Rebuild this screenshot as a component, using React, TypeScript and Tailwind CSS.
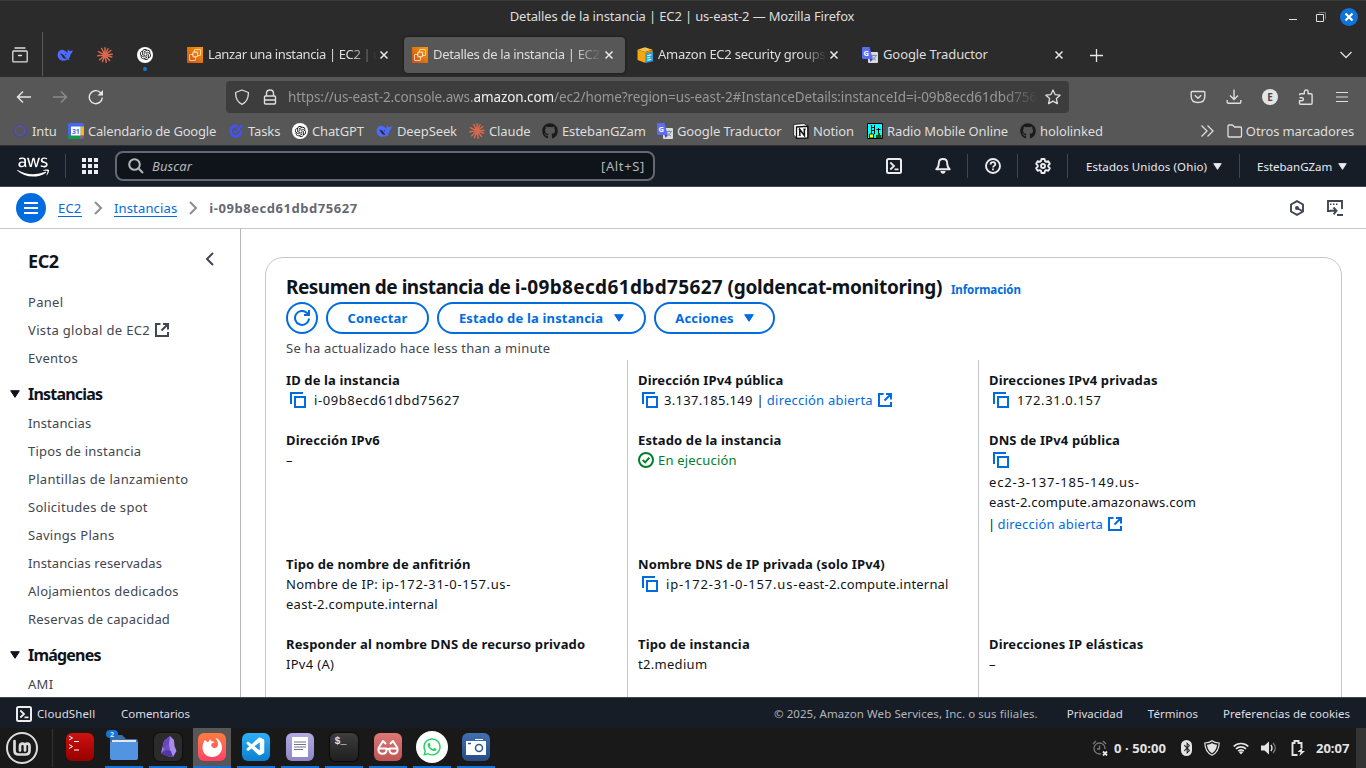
import type { ReactNode } from 'react';
import { FaAws, FaGithub, FaWhatsapp, FaBluetoothB } from 'react-icons/fa';
import { SiOpenai } from 'react-icons/si';
import { VscVscode } from 'react-icons/vsc';

type P = { children?: ReactNode; className?: string };

/* ---------- favicons ---------- */

const Svg = ({ children, className = 'size-4', box = '0 0 16 16' }: P & { box?: string }) => (
  <svg viewBox={box} className={`shrink-0 ${className}`} fill="none">{children}</svg>
);

const DeepSeek = () => (
  <Svg>
    <path fill="#4d6bfe" d="M10.6 6.2C9.6 5 8.4 3.7 6.6 3 4 2.2.8 4 .6 7.4.4 11 3 13.6 6.3 13.7c1.700 0 3-.4 4.200-1.200.7.4 1.600.6 2.300.3-.2-.4-.9-.6-1.100-1.200 1.300-1.500 1.700-3 1.900-4.700 1.300-.4 2-1.600 2-3.700-.9.5-1.800.4-2.500 1C12.500 3.600 11.800 3.200 10.900 2.400c-.6 1.300-.2 2.600-.3 3.800z" />
    <path fill="#2b2b2b" d="M3.200 6.800c1.800-.6 3.300.9 4.300 2.400.7 1 1.300 1.700 2.100 2.200-1.800.9-3.400-.2-4.300-1.700-.6-1-1.200-2-2.100-2.900zM7.400 7c.8-.3 1.900.3 1.900 1.400-.6-.1-.9-.7-1.900-1.400z" />
  </Svg>
);

const Burst = () => (
  <Svg>
    <path stroke="#d9674e" strokeWidth="1.500" strokeLinecap="round" d="M8 8V.8M8 8l3-6.300M8 8l5.800-4.500M8 8l7.200-.8M8 8l6.700 2M8 8l4.600 5.400M8 8l1.200 7.200M8 8l-2.600 6.700M8 8l-5.300 4.700M8 8L.8 8.800M8 8L1.500 4.700M8 8L4.700 1.500" />
  </Svg>
);

const Gpt = () => (
  <span className="flex size-4 shrink-0 items-center justify-center rounded-full bg-white text-black">
    <SiOpenai className="size-[11px]" />
  </span>
);

const Ec2 = () => (
  <Svg>
    <defs><linearGradient id="ec2g" x1="0" y1="1" x2="1" y2="0"><stop stopColor="#c8511b" /><stop offset="1" stopColor="#f90" /></linearGradient></defs>
    <path fill="url(#ec2g)" d="M0 0h16v16H0z" />
    <g stroke="#fff" strokeWidth=".9">
      <rect x="5.900" y="5.100" width="4.700" height="4.700" rx=".6" />
      <path strokeOpacity=".75" d="M7.500 5V3.100c0-.4.3-.6.600-.6h4.800c.4 0 .6.200.6.600v4.800c0 .4-.2.600-.6.600H11M5.900 7.500H3.100c-.4 0-.6.200-.6.600v4.800c0 .4.2.600.6.600h4.800c.4 0 .6-.2.600-.6V10" />
    </g>
  </Svg>
);

const AwsCube = () => (
  <Svg>
    <path fill="#f7c04a" d="M8 .3l7.500 2.500L8 5 .5 2.800z" />
    <path fill="#f4a80b" d="M.5 2.800L8 5v10.700L.5 13z" />
    <path fill="#d98b05" d="M8 5l7.500-2.200V13L8 15.700z" />
    <path fill="#2b9fd8" d="M8.700 6.500L16 4.800v9.400l-7.300 1.800z" />
    <path stroke="#fff" strokeWidth="1.100" d="M10.300 8.700l4-.9M10.300 11l3-.7M10.300 13.200l4-.9" />
  </Svg>
);

const GTranslate = () => (
  <Svg>
    <rect x="6" y="5" width="10" height="11" rx="1" fill="#dcdcdc" />
    <path stroke="#7d8fa5" d="M9.500 8.500H15M12.200 7.500v1M14 8.500c-.5 2-2 3.500-3.500 4.300M10.500 9.500c.8 1.800 2 2.800 3.500 3.500" />
    <path fill="#4a3fc4" d="M7.500 12h3.300L8.700 15z" />
    <path fill="#5b6cf5" d="M1.200 0h6.300l3.300 12H1.200C.5 12 0 11.500 0 10.800V1.200C0 .5.500 0 1.200 0z" />
    <text x="1.500" y="8.500" fontSize="7.500" fontWeight="700" fill="#fff" fontFamily="Noto Sans">G</text>
  </Svg>
);

const Calendar = () => (
  <Svg>
    <rect width="16" height="16" rx="1.500" fill="#4666f0" />
    <path fill="#fbbc04" d="M12.500 3.500H16v9h-3.500z" />
    <path fill="#0c9d45" d="M0 12.500h12.500V16H1.500C.6 16 0 15.400 0 14.500z" />
    <path fill="#ea4335" d="M12.500 12.500H16L12.500 16z" />
    <path fill="#fff" d="M3 3.500h9.500v9H3z" />
    <text x="4" y="10.700" fontSize="6.800" fontWeight="700" fill="#4666f0" fontFamily="Noto Sans">31</text>
  </Svg>
);

const IntuIcon = () => (
  <Svg>
    <circle cx="8" cy="8" r="6.200" stroke="#4c4b9c" strokeWidth="3" strokeDasharray="1 .95" />
    <circle cx="8" cy="8" r="4.700" stroke="#5654c4" />
  </Svg>
);

const TasksIcon = () => (
  <Svg>
    <path stroke="#4353f2" strokeWidth="2.800" d="M10 3.300A5.300 5.300 0 1 0 13 7.500" />
    <path stroke="#4353f2" strokeWidth="2.200" d="M5.500 7.700l2 2 4.500-5" />
    <path fill="#4353f2" d="M13 .8l.8 1.900 1.700.800-1.700.800L13 6.200l-.8-1.900-1.700-.8 1.700-.8z" />
  </Svg>
);

const NotionIcon = () => (
  <Svg>
    <path fill="#fff" stroke="#111" strokeWidth=".8" d="M.7 1.500L11 .6l4.300 2.700v11.600L4 15.500.7 12z" />
    <path fill="#fff" stroke="#111" strokeWidth="1.300" d="M3.500 4l11.300-.7v11.500L3.500 15.400z" />
    <path stroke="#111" strokeWidth="1.500" d="M6.800 12.500V6.500l4.600 6V6" />
    <path stroke="#111" strokeWidth=".8" d="M5.500 6.300h2M10.200 6H13M5.700 12.600h2.200" />
  </Svg>
);

const RadioIcon = () => (
  <Svg>
    <path fill="#0ff" stroke="#000" d="M.5.500h15v15H.5z" />
    <path stroke="#000" d="M4.500 2v9M7.500 2v9M4.500 4.500h3M4.500 7.500h3M11.500 5v6M9.500 6.500h4" />
    <path fill="#ff0" stroke="#000" strokeWidth=".8" d="M2.500 11h4v4h-4z" />
    <path fill="#0a5c0a" d="M9 12h5.500v3H9zM11 10h2v5h-2z" />
  </Svg>
);

/* ---------- Firefox ---------- */

const Close = () => (
  <Svg className="size-4"><path stroke="#e8e8e8" strokeWidth="1.500" d="M4.500 4.500l7 7M11.500 4.500l-7 7" /></Svg>
);

function Tab({ icon, title, active, fade = true, className = '' }: { icon: ReactNode; title: string; active?: boolean; fade?: boolean; className?: string }) {
  return (
    <div className={`mr-1 flex h-9 w-[221px] items-center rounded pl-2 ${active ? 'bg-[#575757] shadow-[0_0_3px_#111]' : ''}`}>
      {icon}
      <span className={`ml-[5px] w-[169px] overflow-hidden whitespace-nowrap ${className} ${fade ? '[mask-image:linear-gradient(to_right,#000_142px,transparent)]' : ''}`}>{title}</span>
      <span className="-ml-px"><Close /></span>
    </div>
  );
}

function Firefox() {
  return (
    <header className="flex h-[145px] shrink-0 flex-col text-[13px] tracking-[-0.12px] text-[#dedede]">
      <div className="flex h-8 items-center border-t border-[#3a3a3a] bg-[#2b2b2b]">
        <div className="w-[78px]" />
        <div className="flex-1 pl-[11px] pr-[10px] text-center tracking-[-0.15px]">Detalles de la instancia | EC2 | us-east-2 — Mozilla Firefox</div>
        <div className="flex items-center pr-2">
          <Svg className="mr-3 size-4"><path stroke="#e0e0e0" d="M4 10.500h8" /></Svg>
          <Svg className="mr-[11px] size-4"><path stroke="#e0e0e0" d="M3.500 5.500h7v7h-7z" /><path stroke="#777" d="M5.500 3.500h7v7" /></Svg>
          <span className="flex size-[18px] items-center justify-center rounded-full bg-[#0f73db]">
            <Svg className="size-4"><path stroke="#fff" strokeWidth="2.200" d="M4.500 4.500l7 7M11.500 4.500l-7 7" /></Svg>
          </span>
        </div>
      </div>
      <div className="flex h-[45px] items-center bg-[#2b2b2b]">
        <div className="flex h-full w-[42px] items-center pl-3">
          <Svg><path stroke="#dedede" strokeWidth="1.300" strokeLinecap="round" d="M3 1h10M1.700 4h12.600c.5 0 .9.400.9.900v9c0 .6-.4 1-.9 1H1.700c-.5 0-.9-.4-.9-1V4.900c0-.5.400-.9.900-.9zM6.500 8.500h3" /></Svg>
        </div>
        <div className="h-11 w-px self-start bg-[#5b5b5b]" />
        <div className="flex w-11 justify-center"><DeepSeek /></div>
        <div className="flex w-9 justify-center"><Burst /></div>
        <div className="relative flex w-11 justify-center"><Gpt /><span className="absolute top-[20px] size-1 rounded-full bg-[#0f7be0]" /></div>
        <div className="ml-[12px] flex">
          <Tab icon={<Ec2 />} title="Lanzar una instancia | EC2 | us-east-2" className="tracking-[-0.38px]" />
          <Tab icon={<Ec2 />} title="Detalles de la instancia | EC2 | us-east-2" active className="tracking-[-0.33px]" />
          <Tab icon={<AwsCube />} title="Amazon EC2 security groups for" className="tracking-[-0.25px]" />
          <Tab icon={<GTranslate />} title="Google Traductor" fade={false} className="tracking-[-0.1px]" />
        </div>
        <Svg className="ml-[9px] size-4"><path stroke="#e8e8e8" strokeWidth="1.300" d="M8.500 2v13M2 8.500h13" /></Svg>
        <Svg className="ml-auto mr-3 size-4"><path stroke="#dedede" strokeWidth="1.300" d="M2.500 5L8 10.500 13.500 5" /></Svg>
      </div>
      <div className="flex h-10 shrink-0 items-center bg-[#575757]">
        <Svg className="ml-4 size-4"><path stroke="#e6e6e6" strokeWidth="1.400" d="M15 8H1.500M7 2.500L1.500 8 7 13.500" /></Svg>
        <Svg className="ml-5 size-4"><path stroke="#8c8c8c" strokeWidth="1.400" d="M1 8h13.500M9 2.500L14.500 8 9 13.500" /></Svg>
        <Svg className="ml-5 size-4"><path stroke="#e6e6e6" strokeWidth="1.400" d="M14.300 8.500A6.500 6.500 0 1 1 12 3.200l2 2" /><path fill="#e6e6e6" d="M15 1v5.500H9.500z" /></Svg>
        <div className="ml-[122px] flex h-8 w-[843px] items-center rounded bg-[#3d3d3d] text-[13.500px] tracking-[-0.1px] text-[#989898]">
          <Svg className="ml-2 size-4"><path stroke="#dedede" strokeWidth="1.300" strokeLinejoin="round" d="M8 1l6.400 2.500C14.500 9 12.500 13 8 15.300 3.500 13 1.500 9 1.600 3.500z" /></Svg>
          <Svg className="ml-3 size-4"><path stroke="#dedede" strokeWidth="1.400" d="M3.500 7h9c.6 0 1 .4 1 1v6c0 .6-.4 1-1 1h-9c-.6 0-1-.4-1-1V8c0-.6.4-1 1-1zM4.500 7V4.500C4.500 2.500 6 1 8 1s3.500 1.500 3.500 3.500V7M2.500 11h11" /></Svg>
          <div className="ml-[10px] w-[750px] overflow-hidden whitespace-nowrap [mask-image:linear-gradient(to_right,#000_715px,transparent)]">
            https://us-east-2.console.aws.<span className="text-[#f0f0f0]">amazon.com</span>/ec2/home?region=us-east-2#InstanceDetails:instanceId=i-09b8ecd61dbd75627
          </div>
          <Svg className="ml-[7px] size-4"><path stroke="#dedede" strokeWidth="1.300" strokeLinejoin="round" d="M8 1l2.100 4.600 5 .6-3.700 3.400 1 5L8 12.100l-4.400 2.500 1-5L.9 6.200l5-.6z" /></Svg>
        </div>
        <Svg className="ml-[121px] size-4"><path stroke="#dedede" strokeWidth="1.400" strokeLinejoin="round" d="M2 2.500h12c.5 0 .8.3.8.8V7.500c0 4-3 6-6.800 6s-6.800-2-6.800-6V3.300c0-.5.3-.8.8-.8zM4.800 6.300L8 9.300l3.200-3" /></Svg>
        <Svg className="ml-5 size-4"><path stroke="#dedede" strokeWidth="1.400" d="M8 .5V10M4 6.500l4 4 4-4M1.200 11v2.300c0 .6.4 1 1 1h11.600c.6 0 1-.4 1-1V11" /></Svg>
        <span className="ml-5 flex size-4 items-center justify-center rounded-full bg-[#e4e4e4] text-[10px] font-bold text-[#4a4a4a]">E</span>
        <Svg className="ml-5 size-4"><path stroke="#dedede" strokeWidth="1.400" strokeLinejoin="round" d="M1.500 6.200c0-.9.300-1.500 1-1.500h3.800V3c0-2.700 3.800-2.700 3.800 0v1.700h3c.6 0 1 .4 1 1v8.600c0 .5-.4.900-1 .9H2.500c-.7 0-1-.5-1-1v-2.400h2.200c2.300 0 2.300-3 0-3H1.500" /></Svg>
        <Svg className="ml-5 size-4"><path stroke="#dedede" strokeWidth="1.200" d="M2 3.500h12M2 8h12M2 12.500h12" /></Svg>
      </div>
      <div className="flex h-7 shrink-0 items-center whitespace-nowrap bg-[#575757] pl-3 leading-5">
        <div className="flex w-[56px] items-center gap-1"><IntuIcon />Intu</div>
        <div className="flex w-[160px] items-center gap-1 tracking-[-0.2px]"><Calendar />Calendario de Google</div>
        <div className="flex w-[64px] items-center gap-1"><TasksIcon />Tasks</div>
        <div className="flex w-[84px] items-center gap-1 tracking-[-0.15px]"><Gpt />ChatGPT</div>
        <div className="flex w-[93px] items-center gap-[5px]"><DeepSeek />DeepSeek</div>
        <div className="flex w-[73px] items-center gap-1"><Burst />Claude</div>
        <div className="flex w-[115px] items-center gap-1"><FaGithub className="size-4 text-[#1b1b1b]" />EstebanGZam</div>
        <div className="flex w-[136px] items-center gap-1"><GTranslate />Google Traductor</div>
        <div className="flex w-[74px] items-center gap-1"><NotionIcon />Notion</div>
        <div className="flex w-[153px] items-center gap-1"><RadioIcon />Radio Mobile Online</div>
        <div className="flex items-center gap-1"><FaGithub className="size-4 text-[#1b1b1b]" />hololinked</div>
        <Svg className="ml-auto mr-3 size-4"><path stroke="#dedede" strokeWidth="1.300" d="M2.500 2.500L8 8l-5.500 5.500M8.500 2.500L14 8l-5.500 5.500" /></Svg>
        <Svg className="mr-[3px] size-4"><path stroke="#dedede" strokeWidth="1.300" strokeLinejoin="round" d="M2 2h3.500l2 2h6c.6 0 1 .4 1 1v8c0 .6-.4 1-1 1H2c-.6 0-1-.4-1-1V3c0-.6.4-1 1-1z" /></Svg>
        <span className="mr-3">Otros marcadores</span>
      </div>
    </header>
  );
}

/* ---------- AWS console ---------- */

const Sep = () => <span className="h-6 w-px shrink-0 bg-[#424650]" />;

const ShellIcon = () => (
  <Svg><rect x="1" y="1" width="14" height="14" rx="1.500" stroke="#ebebf0" strokeWidth="2" /><path stroke="#ebebf0" strokeWidth="1.800" d="M4.300 4.500L8 8l-3.700 3.500M8.500 11.300h4" /></Svg>
);

const Caret = ({ className }: P) => (
  <Svg className={className} box="0 0 10 8"><path fill="currentColor" stroke="currentColor" strokeLinejoin="round" d="M.7.700h8.600L5 7.300z" /></Svg>
);

function AwsNav() {
  return (
    <nav className="flex h-[42px] shrink-0 items-center border-b border-t border-b-[#424650] border-t-[#2d2f33] bg-[#161d26] text-[11.500px] tracking-[0.1px] text-[#ebebf0]">
      <div className="flex w-[65px] justify-center pt-0.5"><FaAws className="size-8 text-white" /></div>
      <Sep />
      <Svg className="ml-4 size-4"><path fill="#ebebf0" d="M0 0h4v4H0zM6 0h4v4H6zM12 0h4v4h-4zM0 6h4v4H0zM6 6h4v4H6zM12 6h4v4h-4zM0 12h4v4H0zM6 12h4v4H6zM12 12h4v4h-4z" /></Svg>
      <div className="ml-[17px] flex h-[30px] w-[540px] items-center rounded-lg border-2 border-[#656871] bg-[#0f141a] px-2 text-[13px] leading-5 text-[#b4b4bb]">
        <Svg className="ml-[3px] size-4"><circle cx="6.500" cy="6.500" r="5.300" stroke="#b4b4bb" strokeWidth="2" /><path stroke="#b4b4bb" strokeWidth="2" d="M10.300 10.300L15 15" /></Svg>
        <i className="ml-[8px]">Buscar</i>
        <span className="ml-auto tracking-[0.65px]">[Alt+S]</span>
      </div>
      <div className="ml-auto flex items-center">
        <ShellIcon />
        <span className="ml-[17px]"><Sep /></span>
        <Svg className="mx-4 size-4"><path stroke="#ebebf0" strokeWidth="1.900" strokeLinejoin="round" d="M8 1c-2.800 0-4.200 2-4.200 4.300 0 3-.8 4.700-2.500 6h13.400c-1.700-1.300-2.500-3-2.500-6C12.200 3 10.800 1 8 1z" /><path fill="#ebebf0" d="M5.500 13h5c0 1.700-1.100 2.800-2.500 2.800S5.500 14.700 5.500 13z" /></Svg>
      </div>
      <div className="flex items-center">
        <Sep />
        <Svg className="ml-[17px] mr-4 size-4"><circle cx="8" cy="8" r="7" stroke="#ebebf0" strokeWidth="1.900" /><path stroke="#ebebf0" strokeWidth="1.800" d="M5.600 6.400c0-1.400 1-2.200 2.400-2.200s2.300.8 2.300 2c0 1.700-2.300 1.700-2.300 3.400M8 10.500v1.800" /></Svg>
        <Sep />
        <Svg className="ml-[17px] mr-4 size-4"><path stroke="#ebebf0" strokeWidth="1.900" strokeLinejoin="round" d="M6.500 1h3l.5 2.100 1.300.8 2-.7 1.500 2.600L13.300 7.300v1.400l1.500 1.500-1.500 2.600-2-.7-1.300.8-.5 2.100h-3L6 12.900l-1.300-.8-2 .7-1.500-2.600 1.500-1.500V7.300L1.200 5.800l1.500-2.600 2 .7L6 3.100z" /><circle cx="8" cy="8" r="2" stroke="#ebebf0" strokeWidth="1.900" /></Svg>
        <Sep />
        <span className="ml-[18px] flex w-[153px] items-center whitespace-nowrap pt-0.5">Estados Unidos (Ohio)<Caret className="mb-0.5 ml-[6px] h-[7px] w-[9px]" /></span>
        <Sep />
        <span className="ml-[17px] flex w-[109px] items-center pt-0.5 tracking-[0px]">EstebanGZam<Caret className="mb-0.5 ml-[6px] h-[7px] w-[9px]" /></span>
      </div>
    </nav>
  );
}

const Chevron = () => <Svg className="mx-2 size-4"><path stroke="#8c8c94" strokeWidth="2" d="M5 2l6 6-6 6" /></Svg>;

function Breadcrumbs() {
  return (
    <div className="flex h-[42px] shrink-0 items-center border-b border-[#c6c6cd] bg-white pl-4 text-[13px] leading-5">
      <span className="flex size-[30px] items-center justify-center rounded-full bg-[#006ce0]"><Svg><path stroke="#fff" strokeWidth="2" d="M1 3h14M1 8h14M1 13h14" /></Svg></span>
      <span className="ml-3 h-[18px] w-6 border-b border-[#006ce0] leading-[18px] tracking-[0.2px] text-[#006ce0]">EC2</span>
      <Chevron />
      <span className="h-[18px] border-b border-[#006ce0] leading-[18px] tracking-[0.15px] text-[#006ce0]">Instancias</span>
      <Chevron />
      <b className="tracking-[0.55px] text-[#656871]">i-09b8ecd61dbd75627</b>
      <Svg className="ml-auto size-4"><path stroke="#424650" strokeWidth="1.900" d="M8 1.200l6 3.300v7L8 14.800l-6-3.300v-7z" /><circle cx="8" cy="8" r="2" fill="#424650" /><path stroke="#424650" strokeWidth="1.800" d="M8 8l6 3.500" /></Svg>
      <Svg className="ml-[22px] mr-[23px] size-4"><path stroke="#424650" strokeWidth="1.900" d="M3.500 11H1V1h14v8M10 15h6M3 10.800h6M6.500 7.500L9.500 10.800l-3 3.500" /><path stroke="#424650" strokeWidth="1.500" d="M3 4.300h1.500M6 4.300h1.500M9 4.300h1.500" /></Svg>
    </div>
  );
}

const External = ({ className = '' }: P) => (
  <Svg className={`inline size-[14px] ${className}`} box="0 0 14 14"><path stroke="currentColor" strokeWidth="2" d="M5.500 1H1v12h12V9M8 1h5v5.500M6.500 7.500L12.500 1.500" /></Svg>
);

const NavItem = ({ children, className = '' }: P) => <div className={`flex h-7 items-center leading-5 ${className}`}>{children}</div>;
const NavHead = ({ children }: P) => (
  <div className="-ml-[18px] flex h-[30px] items-center text-[16px] font-bold leading-5 tracking-[-0.8px] text-[#0f141a]">
    <Caret className="mr-2 h-[8px] w-[10px]" /><span className="pb-px">{children}</span>
  </div>
);

function Sidebar() {
  return (
    <aside className="flex h-full w-[241px] shrink-0 flex-col overflow-hidden border-r border-[#b4b4bb] pl-7 text-[13px] tracking-[0.28px] text-[#424650]">
      <div className="mt-[17px] flex h-[30px] shrink-0 items-center justify-between pr-[22px]">
        <b className="text-[18px] tracking-[-0.4px] text-[#0f141a]">EC2</b>
        <Svg className="mb-1 size-4"><path stroke="#424650" strokeWidth="2" d="M11 2L5 8l6 6" /></Svg>
      </div>
      <div className="mt-3">
        <NavItem>Panel</NavItem>
        <NavItem className="tracking-[0.34px]">Vista global de EC2<External className="ml-[5px]" /></NavItem>
        <NavItem>Eventos</NavItem>
      </div>
      <div className="mt-[7px]">
        <NavHead>Instancias</NavHead>
        <NavItem className="tracking-[0.15px]">Instancias</NavItem>
        <NavItem className="tracking-[0.22px]">Tipos de instancia</NavItem>
        <NavItem className="tracking-[0.32px]">Plantillas de lanzamiento</NavItem>
        <NavItem>Solicitudes de spot</NavItem>
        <NavItem>Savings Plans</NavItem>
        <NavItem className="tracking-[0.1px]">Instancias reservadas</NavItem>
        <NavItem className="tracking-[0.24px]">Alojamientos dedicados</NavItem>
        <NavItem className="tracking-[0.18px]">Reservas de capacidad</NavItem>
      </div>
      <div className="mt-[7px]">
        <NavHead>Imágenes</NavHead>
        <NavItem>AMI</NavItem>
      </div>
    </aside>
  );
}

const Copy = ({ className = 'mr-2' }: P) => (
  <Svg className={`ml-1 inline size-4 text-[#006ce0] ${className}`}><path stroke="currentColor" strokeWidth="2" d="M1 12V1h12M5 5h10v10H5z" /></Svg>
);

const Field = ({ label, children, className = '' }: P & { label: string }) => (
  <div className={className}>
    <div className="h-5 font-bold leading-5 tracking-[0.13px]">{label}</div>
    {children}
  </div>
);

const Btn = ({ children, className = '' }: P) => (
  <span className={`flex h-8 items-center justify-center rounded-full border-2 border-[#006ce0] leading-5 ${className}`}>{children}</span>
);

const Line = ({ children, className = '' }: P) => <div className={`flex h-5 items-center whitespace-nowrap leading-5 ${className}`}>{children}</div>;

function Summary() {
  return (
    <main className="flex-1 pl-6 pr-6 pt-7">
      <section className="h-[520px] rounded-[18px] border border-[#c6c6cd] pl-5 pt-[15px] text-[13px] text-[#0f141a]">
        <div className="flex h-[29px] items-baseline whitespace-nowrap leading-[28px]">
          <h1 className="w-[657px] text-[19px] font-bold tracking-[-0.5px]">Resumen de instancia de <span className="tracking-[0.35px]">i-09b8ecd61dbd75627</span> <span className="tracking-[-0.28px]">(goldencat-monitoring)</span></h1>
          <b className="ml-[8px] text-[11.500px] tracking-[-0.1px] text-[#006ce0]">Información</b>
        </div>
        <div className="flex gap-2 font-bold tracking-[0.17px] text-[#006ce0]">
          <Btn className="w-8"><Svg><path stroke="currentColor" strokeWidth="2" d="M15 8.500A7 7 0 1 1 13 3l1.500 1.500M15 0v5h-5" /></Svg></Btn>
          <Btn className="w-[103px]">Conectar</Btn>
          <Btn className="w-[209px]">Estado de la instancia<Caret className="ml-[11px] h-[8px] w-[10px]" /></Btn>
          <Btn className="w-[121px]">Acciones<Caret className="ml-[10px] h-[8px] w-[10px]" /></Btn>
        </div>
        <div className="h-[26px] pt-[4px] leading-5 tracking-[0.25px] text-[#424650]">Se ha actualizado hace less than a minute</div>
        <div className="flex tracking-[0.3px]">
          <div className="flex h-[400px] w-[341px] flex-col gap-5 pt-[10px]">
            <Field label="ID de la instancia"><Line className="tracking-[0.56px]"><Copy />i-09b8ecd61dbd75627</Line></Field>
            <Field label="Dirección IPv6" className="h-[104px]"><Line>–</Line></Field>
            <Field label="Tipo de nombre de anfitrión" className="h-[60px]">
              <Line><span>Nombre de IP: <span className="tracking-[0.65px]">ip-172-31-0-157.us-</span></span></Line>
              <Line className="tracking-[0.26px]">east-2.compute.internal</Line>
            </Field>
            <Field label="Responder al nombre DNS de recurso privado"><Line>IPv4 (A)</Line></Field>
          </div>
          <div className="flex h-[400px] w-[351px] flex-col gap-5 border-l border-[#c6c6cd] pl-[10px] pt-[10px]">
            <Field label="Dirección IPv4 pública">
              <Line><Copy className="mr-[6px]" />3.137.185.149 |<span className="ml-[3px] tracking-[0.22px] text-[#006ce0]">dirección abierta</span><External className="ml-[5px] text-[#006ce0]" /></Line>
            </Field>
            <Field label="Estado de la instancia" className="h-[104px]">
              <Line className="tracking-[0.2px] text-[#00802f]"><Svg className="mr-1 size-4"><circle cx="8" cy="8" r="7" stroke="currentColor" strokeWidth="2" /><path stroke="currentColor" strokeWidth="2" d="M4.700 8l2.500 2.400L11.300 5.700" /></Svg>En ejecución</Line>
            </Field>
            <Field label="Nombre DNS de IP privada (solo IPv4)" className="h-[60px]">
              <Line className="tracking-[0.2px]"><Copy /><span className="tracking-[0.8px]">ip-172-31-0-157.us-</span>east-2.compute.internal</Line>
            </Field>
            <Field label="Tipo de instancia"><Line>t2.medium</Line></Field>
          </div>
          <div className="flex h-[400px] flex-1 flex-col gap-5 border-l border-[#c6c6cd] pl-[10px] pt-[10px]">
            <Field label="Direcciones IPv4 privadas"><Line className="tracking-[0.6px]"><Copy />172.31.0.157</Line></Field>
            <Field label="DNS de IPv4 pública" className="h-[104px]">
              <Line className="mb-0.5"><Copy /></Line>
              <Line className="tracking-[0.8px]">ec2-3-137-185-149.us-</Line>
              <Line className="tracking-[0.23px]">east-2.compute.amazonaws.com</Line>
              <Line className="mt-0.5"><span className="-ml-px">|</span><span className="ml-[2px] tracking-[0.2px] text-[#006ce0]">dirección abierta</span><External className="ml-[5px] text-[#006ce0]" /></Line>
            </Field>
            <div className="h-[60px]" />
            <Field label="Direcciones IP elásticas"><Line>–</Line></Field>
          </div>
        </div>
      </section>
    </main>
  );
}

function Footer() {
  return (
    <footer className="flex h-[31px] shrink-0 items-center whitespace-nowrap border-t border-[#424650] bg-[#161d26] px-4 pt-px text-[11.500px] text-[#dedee3]">
      <ShellIcon />
      <span className="ml-[5px] w-[84px] tracking-[0.1px]">CloudShell</span>
      <span className="tracking-[-0.03px]">Comentarios</span>
      <span className="ml-auto tracking-[0.08px] text-[#b4b4bb]">© 2025, Amazon Web Services, Inc. o sus filiales.</span>
      <span className="ml-[29px]">Privacidad</span>
      <span className="ml-[25px]">Términos</span>
      <span className="ml-[25px]">Preferencias de cookies</span>
    </footer>
  );
}

/* ---------- desktop panel ---------- */

function Launcher({ children, open, active }: P & { open?: boolean; active?: boolean }) {
  return (
    <div className={`mr-[6px] flex h-10 w-[38px] items-center justify-center border-b-2 ${open ? 'border-[#1273d8]' : 'border-transparent'} ${active ? 'bg-[#575757]' : ''}`}>{children}</div>
  );
}

const Tile = ({ children, className = '' }: P) => (
  <span className={`flex size-7 items-center justify-center rounded-[6px] ${className}`}>{children}</span>
);

function Taskbar() {
  return (
    <div className="flex h-10 shrink-0 items-center bg-[#191919] text-[13px] font-bold leading-5 text-[#e4e4e4]">
      <Svg className="ml-[5px] size-[34px]" box="0 0 34 34">
        <circle cx="17" cy="17" r="15" stroke="#dcdcdc" strokeWidth="2" />
        <path stroke="#dcdcdc" strokeWidth="2.700" strokeLinecap="round" d="M9.500 10v9.500c0 2.500 1.500 4 4 4h7c2.500 0 4-1.500 4-4V15c0-3.300-4.500-3.300-4.500 0v4.500M20 15c0-3.300-5-3.300-5 0v4.500" />
      </Svg>
      <span className="ml-[13px] mr-[8px] h-[38px] w-px bg-[#333]" />
      <Launcher><Tile className="bg-gradient-to-b from-[#d01212] to-[#960000]"><Svg className="size-7" box="0 0 28 28"><path stroke="#fff" strokeWidth="1" d="M3 3l3.500 2L3 7M8 8.500h5M3 11.500l3.500 2-3.500 2M8 17h5" /></Svg></Tile></Launcher>
      <Launcher open>
        <span className="relative">
          <Svg className="size-7" box="0 0 28 28"><path fill="#3f6ea5" d="M0 2h12l4 4h10c1 0 2 .7 2 2v4H0z" /><path fill="#e6e6e6" d="M2 7h24v4H2z" /><path fill="#5294e2" d="M0 9h28v16c0 1-.7 2-2 2H2c-1 0-2-.7-2-2z" /></Svg>
          <span className="absolute -left-1 -top-[3px] flex h-[8px] w-3 items-center justify-center rounded-full bg-[#1273d8] text-[7px] leading-none">2</span>
        </span>
      </Launcher>
      <Launcher open><Tile className="bg-[#2b2b2b] shadow-[0_0_1px_1px_#111]"><Svg className="size-7" box="0 0 28 28"><path fill="#a58bea" d="M16 3l4 4 .5 6 2 5-3.500 6-6-1-6-3L8.500 14 10 8z" /><path fill="#6a45c2" d="M16 3l-1 8-5 5-1.500-2L10 8zM7 20l6-3 4 1 2 6-6-1z" /><path fill="#4a2c96" d="M15 11l1 6 3 7-6-1-6-3 3-4z" fillOpacity=".6" /></Svg></Tile></Launcher>
      <Launcher open active><Tile className="bg-gradient-to-b from-[#ff7b3d] to-[#ff3f66]"><Svg className="size-7" box="0 0 28 28"><path fill="#fff" d="M7 7l3 2.500 2-3.500c1 2 2 2.500 4.500 3-1 .7-1.500 1.200-3 1.500-1.500 5 6 6.500 6.500 1 .2-2.500-1-4-2.500-6.500C21.500 6 24 10.500 24 14.500 24 20 19.500 24 14.300 24 8.500 24 4.500 20 4.500 14.500 4.500 11.500 5.300 9 7 7z" /></Svg></Tile></Launcher>
      <Launcher open><Tile className="bg-gradient-to-b from-[#2eb0f5] to-[#087fd0]"><VscVscode className="size-[22px] text-white" /></Tile></Launcher>
      <Launcher open><Tile className="bg-gradient-to-b from-[#b3abe2] to-[#8e85c9]"><Svg className="size-7" box="0 0 28 28"><path fill="#fff" d="M6 4h16v20H6z" /><path stroke="#73718c" d="M8 9h12M8 11.500h12M8 14h12M8 16.500h9" /></Svg></Tile></Launcher>
      <Launcher open><Tile className="bg-gradient-to-b from-[#3d3d3d] to-[#1f1f1f] shadow-[0_0_1px_1px_#0a0a0a]"><span className="mb-[11px] mr-[7px] font-['Liberation_Mono'] text-[10px] leading-none">$_</span></Tile></Launcher>
      <Launcher open><Tile className="bg-gradient-to-b from-[#df7777] to-[#bd5555]"><Svg className="size-7" box="0 0 28 28"><path stroke="#fff" strokeWidth="2" strokeLinecap="round" strokeLinejoin="round" d="M4.500 15.500h8v1.500c0 5-8 5-8 0zM15.500 15.500h8v1.500c0 5-8 5-8 0zM12.500 16h3M4.500 15l4.500-7 2.500 2.500M23.500 15l-4.500-7-2.500 2.500" /></Svg></Tile></Launcher>
      <Launcher open><span className="flex size-8 shrink-0 items-center justify-center rounded-full bg-white"><FaWhatsapp className="size-5 text-[#25d366]" /></span></Launcher>
      <Launcher open><Tile className="bg-gradient-to-b from-[#416fb0] to-[#264c85]"><Svg className="size-7" box="0 0 28 28"><path fill="#fff" d="M4 8h20v14H4zM13 6h8v1h-8z" /><path stroke="#2f5796" strokeWidth="1.500" d="M6 10.500h3" /><circle cx="17" cy="15" r="3.500" stroke="#2f5796" strokeWidth="1.500" /></Svg></Tile></Launcher>
      <div className="ml-auto flex h-full items-center">
        <Svg className="mr-[6px] size-4"><circle cx="7.500" cy="8.500" r="5.500" stroke="#777" strokeWidth="1.300" /><path stroke="#777" strokeWidth="1.300" d="M1 4l3-3M14 4l-3-3M7.500 5.500v3.500H5" /><path fill="#191919" d="M9 9h7v7H9z" /><path stroke="#e4e4e4" strokeWidth="1.800" d="M11 11.500l4 4M15 11.500l-4 4" /></Svg>
        <span className="w-[67px] tracking-[0.1px]">0 · 50:00</span>
        <span className="flex h-4 w-[11px] items-center justify-center rounded-full bg-[#e4e4e4] text-[#191919]"><FaBluetoothB className="h-3 w-2" /></span>
        <Svg className="ml-3 size-4"><path stroke="#e4e4e4" strokeWidth="1.200" d="M8 .8C6 2.500 3.500 3 .8 3 1 8.500 3 13 8 15.300 13 13 15 8.500 15.200 3 12.500 3 10 2.500 8 .8z" /><path fill="#e4e4e4" d="M8 3C6.500 4 5 4.500 3 4.700 3.300 8.500 5 11.500 8 13.200c3-1.700 4.700-4.700 5-8.500C11 4.500 9.500 4 8 3z" /></Svg>
        <Svg className="ml-[13px] size-4"><path fill="#e4e4e4" d="M8 14.500L5.800 12c1.200-1.100 3.200-1.100 4.400 0z" /><path stroke="#e4e4e4" strokeWidth="1.700" d="M.7 6.500c4-4 10.600-4 14.600 0M3 8.900c2.800-2.700 7.200-2.700 10 0M5.200 11.100c1.600-1.500 4-1.500 5.600 0" /></Svg>
        <Svg className="ml-3 size-4"><path fill="#e4e4e4" d="M0 5.500h3.500L8 1.500v13l-4.500-4H0z" /><path stroke="#e4e4e4" strokeWidth="1.500" d="M9.800 5c1.500 1.500 1.500 4.500 0 6" /><path stroke="#777" strokeWidth="1.300" d="M12 3c3 2.800 3 7.200 0 10" /></Svg>
        <Svg className="ml-3 mr-px size-4"><path stroke="#e4e4e4" strokeWidth="1.900" d="M8.500 15H3.500V3h2V1h4v2h3v5" /><path fill="#e4e4e4" d="M13.500 7.500L8.500 12h3l-1 4L16 11h-3z" /></Svg>
        <span className="ml-[10px] w-[40px]">20:07</span>
        <span className="h-full w-[10px] bg-[#343434]" />
      </div>
    </div>
  );
}

export default function App() {
  return (
    <div className="flex h-[768px] w-[1366px] flex-col overflow-hidden bg-white font-['Noto_Sans',sans-serif]">
      <Firefox />
      <AwsNav />
      <Breadcrumbs />
      <div className="flex h-[468px] shrink-0 overflow-hidden">
        <Sidebar />
        <Summary />
      </div>
      <Footer />
      <Taskbar />
    </div>
  );
}
